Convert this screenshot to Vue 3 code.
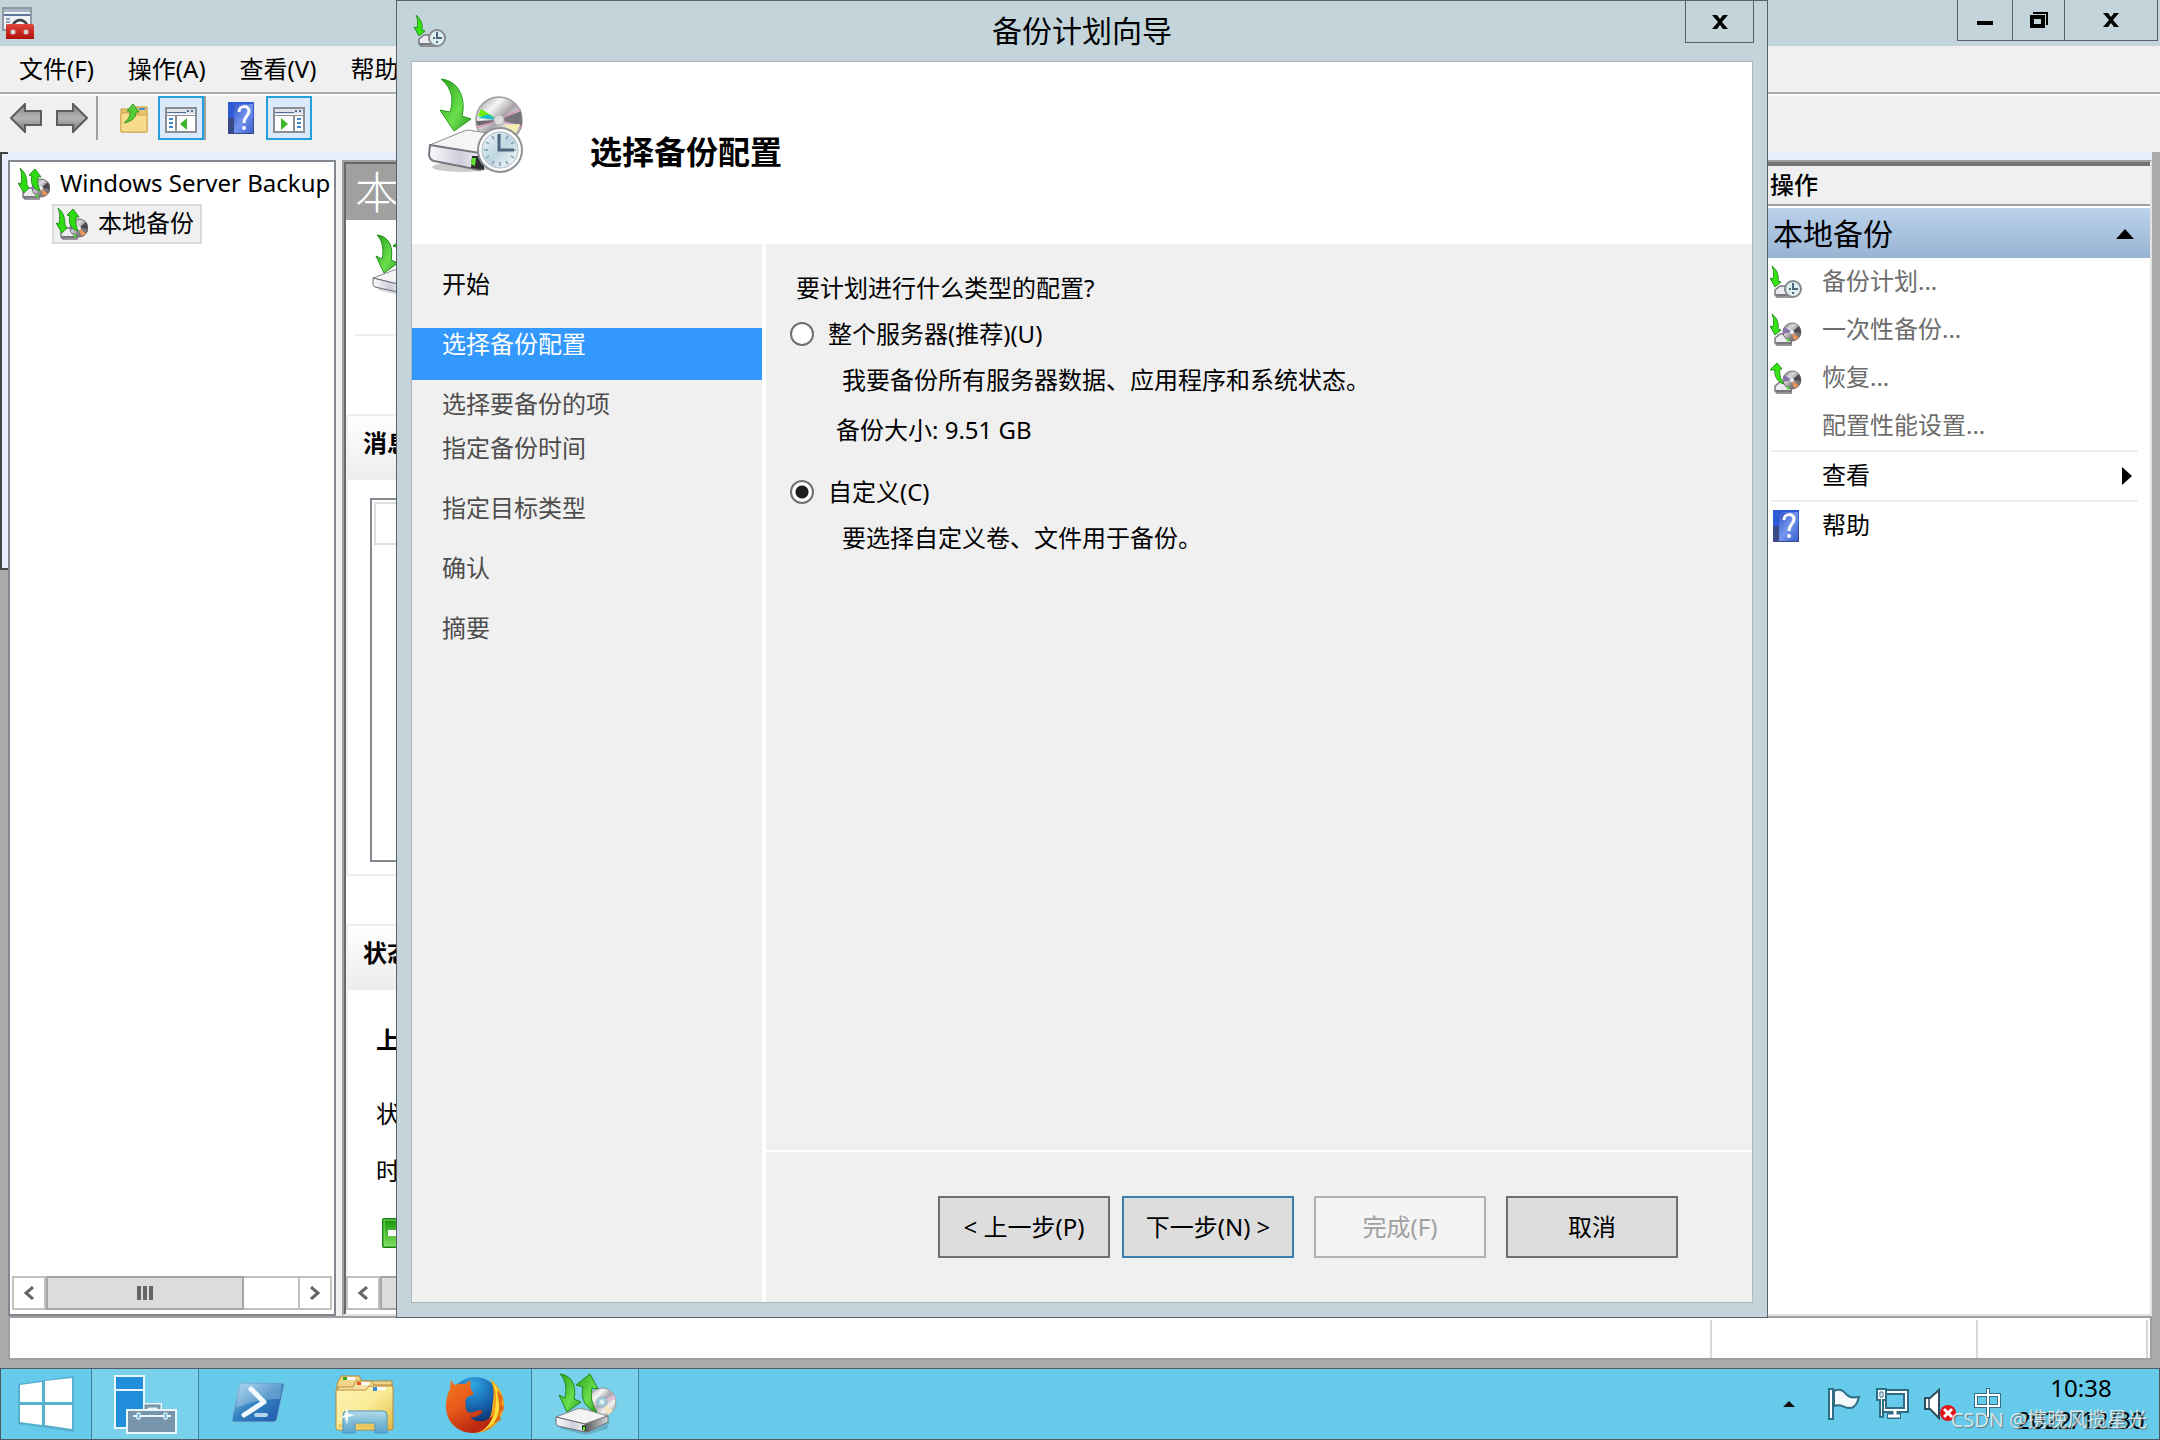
<template>
  <div class="desktop">
    <!-- Общие символы иконок -->
    <svg class="sprite" width="0" height="0" aria-hidden="true">
      <defs>
        <linearGradient id="g-green" x1="0" y1="0" x2="1" y2="1">
          <stop offset="0" stop-color="#2aa01c" />
          <stop offset="0.6" stop-color="#6be04c" />
          <stop offset="1" stop-color="#2c9a1e" />
        </linearGradient>
        <linearGradient id="g-disc" x1="0" y1="0" x2="1" y2="1">
          <stop offset="0" stop-color="#8d8d8d" />
          <stop offset="0.3" stop-color="#f6f6f6" />
          <stop offset="0.5" stop-color="#a9a4a8" />
          <stop offset="0.7" stop-color="#f3f0f2" />
          <stop offset="1" stop-color="#858585" />
        </linearGradient>
        <linearGradient id="g-disc-dark" x1="0" y1="0" x2="1" y2="1">
          <stop offset="0" stop-color="#6d6d70" />
          <stop offset="0.35" stop-color="#dcdcde" />
          <stop offset="0.6" stop-color="#8a868a" />
          <stop offset="1" stop-color="#5c5c5e" />
        </linearGradient>
        <linearGradient id="g-face" x1="0" y1="0" x2="1" y2="0">
          <stop offset="0" stop-color="#fafafd" />
          <stop offset="0.6" stop-color="#cfcfdc" />
          <stop offset="1" stop-color="#ededf4" />
        </linearGradient>
        <linearGradient id="g-side" x1="0" y1="0" x2="1" y2="0">
          <stop offset="0" stop-color="#55555a" />
          <stop offset="1" stop-color="#d8d8da" />
        </linearGradient>
        <linearGradient id="g-clock" x1="0" y1="0" x2="1" y2="1">
          <stop offset="0" stop-color="#f4fafc" />
          <stop offset="0.5" stop-color="#bdd6e0" />
          <stop offset="1" stop-color="#ffffff" />
        </linearGradient>
        <linearGradient id="g-arrow" x1="0" y1="0" x2="0" y2="1">
          <stop offset="0" stop-color="#7d7d7d" />
          <stop offset="0.5" stop-color="#b4b4b4" />
          <stop offset="1" stop-color="#777777" />
        </linearGradient>
        <linearGradient id="g-help" x1="0" y1="0" x2="1" y2="1">
          <stop offset="0" stop-color="#3557c8" />
          <stop offset="0.5" stop-color="#7494ee" />
          <stop offset="1" stop-color="#3a62d0" />
        </linearGradient>
        <linearGradient id="g-folder" x1="0" y1="0" x2="1" y2="1">
          <stop offset="0" stop-color="#fdf3b4" />
          <stop offset="0.5" stop-color="#faeb97" />
          <stop offset="1" stop-color="#e3b93f" />
        </linearGradient>
        <linearGradient id="g-ps" x1="0" y1="0" x2="1" y2="1">
          <stop offset="0" stop-color="#9fd3ec" />
          <stop offset="0.5" stop-color="#2f7fc0" />
          <stop offset="1" stop-color="#2458ac" />
        </linearGradient>
        <linearGradient id="g-red" x1="0" y1="0" x2="0" y2="1">
          <stop offset="0" stop-color="#e2463c" />
          <stop offset="1" stop-color="#b3100c" />
        </linearGradient>
        <radialGradient id="g-globe" cx="0.45" cy="0.15" r="0.85">
          <stop offset="0" stop-color="#30a7e6" />
          <stop offset="0.55" stop-color="#1560a8" />
          <stop offset="1" stop-color="#0a1f56" />
        </radialGradient>
        <linearGradient id="g-fox" x1="0" y1="0" x2="0.5" y2="1">
          <stop offset="0" stop-color="#f07a1e" />
          <stop offset="0.5" stop-color="#ea5a1a" />
          <stop offset="1" stop-color="#b8260f" />
        </linearGradient>
        <linearGradient id="g-glass" x1="0" y1="0" x2="0" y2="1">
          <stop offset="0" stop-color="#b4dcec" />
          <stop offset="0.5" stop-color="#7fbdd8" />
          <stop offset="1" stop-color="#5aa5cf" />
        </linearGradient>
        <linearGradient id="g-ok" x1="0" y1="0" x2="0" y2="1">
          <stop offset="0" stop-color="#18990f" />
          <stop offset="1" stop-color="#7edc5c" />
        </linearGradient>

        <symbol id="i-backup" viewBox="0 0 64 64">
          <path d="M4 47 30 62 55 50 52 58 30 64 6 58Z" fill="#000" opacity=".15" />
          <circle cx="47" cy="31" r="14" fill="url(#g-disc)" stroke="#9a9a9a" />
          <path d="M47 31 59 24 61 28Z" fill="#e5b9d8" />
          <path d="M47 31 58 40 53 44Z" fill="#f5e8bd" />
          <circle cx="47" cy="31" r="5" fill="#a9cfdd" stroke="#8cb4c4" />
          <circle cx="47" cy="31" r="2" fill="#e9f4f8" />
          <path d="M1 46 22 38Q25 37 29 38L53 45 30 53Z" fill="#f4f4f4" stroke="#8a8a8a" />
          <path d="M1 46 30 53V61L3 55Q1 54 1 52Z" fill="url(#g-face)" stroke="#6a6a72" />
          <path d="M30 53 53 45V51L33 61 30 61Z" fill="url(#g-side)" stroke="#777" />
          <path d="M27 54 31 55V60L27 59Z" fill="#173d12" />
          <path d="M28 56H30V59H28Z" fill="#6dea3c" />
          <path d="M5 3C16 4 22 14 19 28L26 31 12 41 4 24 10 27C12 18 11 9 5 3Z" fill="url(#g-green)" stroke="#208a18" />
          <path d="M35 3 43 18 37 17C35 25 37 34 42 41 31 38 25 28 28 16L21 14Z" fill="url(#g-green)" stroke="#208a18" />
        </symbol>

        <symbol id="i-wizard" viewBox="0 0 96 96">
          <ellipse cx="34" cy="89" rx="30" ry="5" fill="#000" opacity=".2" />
          <circle cx="71" cy="42" r="23" fill="url(#g-disc)" stroke="#9b9b9b" stroke-width="1.5" />
          <path d="M71 42 50 38 53 31Z" fill="#6af000" />
          <path d="M71 42 50 40 60 36Z" fill="#1fc0c8" />
          <path d="M71 42 93 33 94 48Z" fill="#77737a" />
          <path d="M71 42 48 43 50 48Z" fill="#6d686d" />
          <path d="M71 42 93 31M71 42 49 50M71 42 94 50" stroke="#dd7fb8" stroke-width="1" />
          <path d="M75 47 92 46 88 55Z" fill="#f6eeb0" />
          <circle cx="71" cy="42" r="5" fill="#ddd" stroke="#b5b5b5" />
          <path d="M2 67 36 53Q40 51 46 53L60 55 52 77Z" fill="#f5f5f5" stroke="#8c8c8c" />
          <path d="M2 67 52 75V92L6 83Q2 82 1 77Z" fill="url(#g-face)" stroke="#77777f" stroke-width="2" />
          <path d="M44 78 56 78 56 92 43 90Z" fill="#2d2d30" />
          <path d="M44 80 48 80 47 88 43 86Z" fill="#5ee02e" />
          <circle cx="72" cy="72" r="22" fill="#fff" stroke="#8e9296" stroke-width="2" />
          <circle cx="72" cy="72" r="18" fill="url(#g-clock)" stroke="#a9b8c0" />
          <path d="M72 56V60M72 84V88M56 72H60M84 72H88M64 58 66 61M80 58 78 61M58 64 61 66M86 64 83 66M58 80 61 78M64 86 66 83M80 86 78 83M86 80 83 78" stroke="#7f9fb0" stroke-width="1.5" />
          <path d="M71 56V72H86" fill="none" stroke="#4a667e" stroke-width="3" />
          <path d="M13 1C32 3 38 22 34 38L43 41 26 53 12 32 22 34C26 22 24 10 13 1Z" fill="url(#g-green)" stroke="#259a1d" />
        </symbol>

        <symbol id="i-drive-s" viewBox="0 0 32 32">
          <path d="M5 24 10 20H22L21 31H7L5 29Z" fill="#ececf0" stroke="#77777f" stroke-width="1.5" />
          <path d="M6 29H21" stroke="#77777f" stroke-width="2" />
        </symbol>
        <symbol id="i-disc-s" viewBox="0 0 32 32">
          <circle cx="22" cy="18" r="9" fill="url(#g-disc-dark)" stroke="#6a6a6d" />
          <path d="M22 18 14 13 13 20Z" fill="#8a6fae" />
          <path d="M22 18 29 12 31 19Z" fill="#4d484c" />
          <path d="M22 18 29 24 24 26Z" fill="#f2935c" />
          <path d="M16 24 20 26 18 28Z" fill="#4be01e" />
          <circle cx="22" cy="18" r="2" fill="#eee" />
        </symbol>
        <symbol id="i-down-s" viewBox="0 0 32 32">
          <path d="M2 0C7 4 9 9 8 15L11 16 5 21 0 12 3 13C4 8 4 4 2 0Z" fill="#35e612" stroke="#2b8f22" />
        </symbol>
        <symbol id="i-up-s" viewBox="0 0 32 32">
          <path d="M7 1 12 7H10C9 13 11 18 14 22 7 20 4 14 5 8L0 8Z" fill="#35e612" stroke="#2b8f22" />
        </symbol>
        <symbol id="i-clock-s" viewBox="0 0 32 32">
          <circle cx="23" cy="23" r="8" fill="#e0eff0" stroke="#858a8c" stroke-width="2" />
          <path d="M23 17V23H28M19 23H21M23 26V28" fill="none" stroke="#4a667e" stroke-width="2" />
        </symbol>

        <symbol id="i-schedule" viewBox="0 0 32 32">
          <use href="#i-drive-s" /><use href="#i-down-s" /><use href="#i-clock-s" />
        </symbol>
        <symbol id="i-once" viewBox="0 0 32 32">
          <use href="#i-drive-s" /><use href="#i-disc-s" /><use href="#i-down-s" />
        </symbol>
        <symbol id="i-recover" viewBox="0 0 32 32">
          <use href="#i-drive-s" /><use href="#i-disc-s" /><use href="#i-up-s" />
        </symbol>
        <symbol id="i-node" viewBox="0 0 32 32">
          <use href="#i-drive-s" /><use href="#i-disc-s" x="1" y="2" />
          <path d="M2 0C7 4 9 9 9 17L11 20 6 25 0 15 3 16C4 10 4 4 2 0Z" fill="#2fdc12" stroke="#2b8f22" />
          <path d="M17 1 23 9H20C19 14 20 18 22 23 14 21 12 13 14 8L11 7Z" fill="#2fdc12" stroke="#2b8f22" />
        </symbol>

        <symbol id="i-help" viewBox="0 0 26 32">
          <path d="M0 0H26V32H0Z" fill="#3a4a86" />
          <path d="M0 0H26V16H0Z" fill="#2f5ad6" />
          <path d="M6 2H25V31H6Z" fill="url(#g-help)" />
          <path d="M11 10C11 3 21 3 21 9 21 14 16 14 16 21" fill="none" stroke="#fff" stroke-width="3" />
          <circle cx="16" cy="26" r="2" fill="#fff" />
        </symbol>

        <symbol id="i-mmc" viewBox="0 0 32 32">
          <path d="M1 1H29V23H1Z" fill="#eef1f4" stroke="#8f9aa5" stroke-width="2" />
          <path d="M2 2H28V5H2Z" fill="#a9b4c8" />
          <path d="M2 7H28V9H2Z" fill="#5f7299" />
          <path d="M4 12H8M4 15H8M4 18H8" stroke="#6a8ab0" stroke-width="1.5" />
          <path d="M11 17Q18 9 25 17" fill="none" stroke="#3f4145" stroke-width="2.5" />
          <path d="M4 19Q4 17 6 17H30Q32 17 32 19V32H4Z" fill="url(#g-red)" />
          <circle cx="11" cy="25" r="2.5" fill="#d9d0d0" /><circle cx="24" cy="25" r="2.5" fill="#d9d0d0" />
        </symbol>
      </defs>
    </svg>

    <!-- Окно консоли -->
    <section class="console">
      <header class="titlebar">
        <svg class="ico32"><use href="#i-mmc" /></svg>
        <div class="win-controls">
          <button class="win-btn" aria-label="最小化">
            <svg width="16" height="16" viewBox="0 0 16 16"><path d="M0 9H16V13H0Z" /></svg>
          </button>
          <button class="win-btn middle" aria-label="还原">
            <svg width="18" height="16" viewBox="0 0 18 16">
              <path d="M3 0H18V13H16V2H3Z" /><path d="M0 3H15V16H0ZM4 7V12H11V7Z" fill-rule="evenodd" />
            </svg>
          </button>
          <button class="win-btn wide" aria-label="关闭">
            <svg width="16" height="14" viewBox="0 0 16 14"><path d="M0 0H5L8 4 11 0H16L10 7 16 14H11L8 10 5 14H0L6 7Z" /></svg>
          </button>
        </div>
      </header>

      <nav class="menubar">
        <button v-for="item in menu" :key="item" class="menu-item">{{ item }}</button>
      </nav>

      <div class="toolbar">
        <button class="tool" aria-label="后退">
          <svg width="32" height="30" viewBox="0 0 32 30"><path d="M1 15 15 1V8H31V22H15V29Z" fill="url(#g-arrow)" stroke="#5d5d5d" stroke-width="2" /></svg>
        </button>
        <button class="tool" aria-label="前进">
          <svg width="32" height="30" viewBox="0 0 32 30"><path d="M31 15 17 1V8H1V22H17V29Z" fill="url(#g-arrow)" stroke="#5d5d5d" stroke-width="2" /></svg>
        </button>
        <span class="tool-sep"></span>
        <button class="tool folder" aria-label="上移">
          <svg width="28" height="30" viewBox="0 0 28 30">
            <path d="M1 6H12L14 4H27V29H1Z" fill="#e8c468" stroke="#c39a3c" />
            <path d="M1 10H12L14 12H27V29H1Z" fill="#f8dc8e" stroke="#cfa64a" />
            <path d="M19 5H25V7H19Z" fill="#3f8fd8" />
            <path d="M13 1 19 9 16 9C16 15 12 18 4 20 10 15 10 12 10 8L7 8Z" fill="#57cc3a" stroke="#2f9a22" />
          </svg>
        </button>
        <button class="tool pressed" aria-label="显示树">
          <svg width="32" height="26" viewBox="0 0 32 26">
            <path d="M1 1H31V25H1Z" fill="#fff" stroke="#8b8f94" stroke-width="2" />
            <path d="M2 2H30V7H2Z" fill="#dfe3e8" /><path d="M2 5H21V6H2ZM22 3H24V5H22ZM26 3H28V5H26Z" fill="#4f6f96" />
            <path d="M2 8H30V9H2ZM10 9H12V25H10Z" fill="#8b8f94" />
            <path d="M4 12H8M4 16H8M4 20H8" stroke="#3f86cc" stroke-width="2" />
            <path d="M22 11V23L15 17Z" fill="#3fb52a" />
          </svg>
        </button>
        <span class="tool-sep tight"></span>
        <button class="tool help" aria-label="帮助">
          <svg width="26" height="32"><use href="#i-help" /></svg>
        </button>
        <button class="tool pressed" aria-label="显示操作窗格">
          <svg width="32" height="26" viewBox="0 0 32 26">
            <path d="M1 1H31V25H1Z" fill="#fff" stroke="#8b8f94" stroke-width="2" />
            <path d="M2 2H30V7H2Z" fill="#dfe3e8" /><path d="M2 5H21V6H2ZM22 3H24V5H22ZM26 3H28V5H26Z" fill="#4f6f96" />
            <path d="M2 8H30V9H2ZM20 9H22V25H20Z" fill="#8b8f94" />
            <path d="M24 12H28M24 16H28M24 20H28" stroke="#3f86cc" stroke-width="2" />
            <path d="M8 11V23L15 17Z" fill="#3fb52a" />
          </svg>
        </button>
      </div>

      <div class="workspace">
        <div class="edge"></div>
        <div class="frame">
          <div class="panes">
            <aside class="tree">
              <ul class="tree-list">
                <li class="tree-node">
                  <svg class="ico32"><use href="#i-node" /></svg><span class="label">Windows Server Backup</span>
                </li>
                <li class="tree-node child">
                  <svg class="ico32"><use href="#i-node" /></svg><span class="label">本地备份</span>
                </li>
              </ul>
              <div class="scrollbar">
                <button class="scroll-btn" aria-label="向左滚动">
                  <svg width="12" height="14" viewBox="0 0 12 14"><path d="M10 1 3 7 10 13" /></svg>
                </button>
                <div class="thumb"><i></i><i></i><i></i></div>
                <button class="scroll-btn end" aria-label="向右滚动">
                  <svg width="12" height="14" viewBox="0 0 12 14"><path d="M2 1 9 7 2 13" /></svg>
                </button>
              </div>
            </aside>

            <main class="center">
              <h2 class="center-title">本地备份</h2>
              <div class="center-intro">
                <svg width="64" height="64"><use href="#i-backup" /></svg>
              </div>
              <section class="group messages">
                <h3 class="group-title">消息</h3>
                <div class="list"><div class="list-head"></div></div>
              </section>
              <section class="group status">
                <h3 class="group-title">状态</h3>
                <div class="status-rows">
                  <strong class="status-line">上次备份</strong>
                  <span class="status-line second">状态:</span>
                  <span class="status-line third">时间:</span>
                  <svg class="ok" width="30" height="30" viewBox="0 0 30 30">
                    <rect width="30" height="30" rx="2" fill="#15800d" />
                    <rect x="2" y="2" width="26" height="26" fill="url(#g-ok)" stroke="#8be070" />
                    <path d="M6 12H17V7L25 15 17 23V18H6Z" fill="#fff" />
                  </svg>
                </div>
              </section>
              <div class="scrollbar center-scroll">
                <button class="scroll-btn" aria-label="向左滚动">
                  <svg width="12" height="14" viewBox="0 0 12 14"><path d="M10 1 3 7 10 13" /></svg>
                </button>
                <div class="thumb"></div>
              </div>
            </main>

            <aside class="actions">
              <h3 class="actions-head">操作</h3>
              <div class="actions-group">
                <span>本地备份</span>
                <svg width="18" height="10" viewBox="0 0 18 10"><path d="M9 0 18 10H0Z" /></svg>
              </div>
              <ul class="action-list">
                <li v-for="a in actions" :key="a.label" :class="{ ruled: a.ruled }">
                  <button :class="['action', { dim: a.dim }]">
                    <span class="action-icon">
                      <svg v-if="a.icon" class="ico32"><use :href="'#' + a.icon" /></svg>
                    </span>
                    <span class="label">{{ a.label }}</span>
                    <svg v-if="a.sub" class="sub" width="10" height="18" viewBox="0 0 10 18"><path d="M0 0 10 9 0 18Z" /></svg>
                  </button>
                </li>
              </ul>
            </aside>
          </div>
          <footer class="statusbar"><span></span><span></span><span></span></footer>
        </div>
      </div>
    </section>

    <!-- Мастер расписания архивации -->
    <section class="wizard" role="dialog" aria-labelledby="wizard-title">
      <header class="wizard-bar">
        <svg class="ico32"><use href="#i-schedule" /></svg>
        <h1 id="wizard-title">备份计划向导</h1>
        <button class="win-btn wizard-close" aria-label="关闭">
          <svg width="16" height="14" viewBox="0 0 16 14"><path d="M0 0H5L8 4 11 0H16L10 7 16 14H11L8 10 5 14H0L6 7Z" /></svg>
        </button>
      </header>
      <div class="wizard-body">
        <div class="wizard-head">
          <svg width="96" height="96"><use href="#i-wizard" /></svg>
          <h2>选择备份配置</h2>
        </div>
        <div class="wizard-main">
          <ol class="steps">
            <li
              v-for="(step, i) in steps"
              :key="step.label"
              :class="['step', { done: i < current, active: i === current, compact: step.compact }]"
            >
              {{ step.label }}
            </li>
          </ol>
          <div class="page">
            <fieldset class="options">
              <legend>要计划进行什么类型的配置?</legend>
              <div class="option">
                <label><input v-model="config" type="radio" name="config" value="full" />整个服务器(推荐)(U)</label>
                <p>我要备份所有服务器数据、应用程序和系统状态。</p>
                <p class="size">备份大小: 9.51 GB</p>
              </div>
              <div class="option custom">
                <label><input v-model="config" type="radio" name="config" value="custom" />自定义(C)</label>
                <p>要选择自定义卷、文件用于备份。</p>
              </div>
            </fieldset>
            <footer class="buttons">
              <button class="btn">&lt; 上一步(P)</button>
              <button class="btn primary">下一步(N) &gt;</button>
              <button class="btn spaced" disabled>完成(F)</button>
              <button class="btn spaced">取消</button>
            </footer>
          </div>
        </div>
      </div>
    </section>

    <!-- Панель задач -->
    <footer class="taskbar">
      <button class="start" aria-label="开始">
        <svg width="56" height="56" viewBox="0 0 56 56">
          <path d="M0 8 56 0V56L0 48Z" fill="#58b0cf" />
          <path d="M2 9 24 6V26H2ZM27 5 54 2V26H27ZM2 29H24V49L2 46ZM27 29H54V53L27 49Z" fill="#fff" />
        </svg>
      </button>
      <button class="task open" aria-label="服务器管理器">
        <svg width="64" height="60" viewBox="0 0 64 60">
          <path d="M2 2H31V54H2Z" fill="#218edb" stroke="#e9f6fc" stroke-width="2" />
          <path d="M2 16H31" stroke="#e9f6fc" stroke-width="2" />
          <path d="M33 36V32H46V36" fill="none" stroke="#e9f6fc" stroke-width="6" />
          <path d="M33 36V32H46V36" fill="none" stroke="#7695aa" stroke-width="3" />
          <path d="M14 36H63V59H14Z" fill="#7695aa" stroke="#e9f6fc" stroke-width="2" />
          <path d="M20 42H58" stroke="#e9f6fc" stroke-width="2" />
          <path d="M24 39H27V45H24ZM51 39H54V45H51Z" fill="#54b4e4" stroke="#fff" />
        </svg>
      </button>
      <button class="task" aria-label="PowerShell">
        <svg width="60" height="44" viewBox="-3 0 60 44">
          <path d="M14 1H54Q57 1 56 4L49 37Q48 40 45 40H6Q3 40 4 37L11 4Q11 1 14 1Z" fill="url(#g-ps)" stroke="#7db9d8" />
          <path d="M14 2H54L52 17Q30 16 8 26L12 4Z" fill="#fff" opacity=".25" />
          <path d="M23 7 36 20 16 33" fill="none" stroke="#f2f9fd" stroke-width="5" stroke-linecap="round" stroke-linejoin="round" />
          <path d="M28 33H38" stroke="#b4d4ee" stroke-width="4" stroke-linecap="round" />
        </svg>
      </button>
      <button class="task" aria-label="文件资源管理器">
        <svg width="60" height="60" viewBox="0 0 60 60">
          <path d="M2 10 6 2H24L27 7H57V30H2Z" fill="#efd489" stroke="#b98a3a" />
          <path d="M3 13H18L21 7H36L39 11H57V30H3Z" fill="#f6e2a0" stroke="#b98a3a" />
          <path d="M1 16H31L34 12H58V54Q58 56 56 56H3Q1 56 1 54Z" fill="url(#g-folder)" stroke="#b98a3a" />
          <path d="M9 3H20V6H9ZM23 8H34V11H23ZM39 13H51V16H39Z" fill="#fff" />
          <path d="M8 3H12V6H8Z" fill="#3aa51c" /><path d="M22 8H26V11H22Z" fill="#e45316" /><path d="M38 13H42V17H38Z" fill="#3b8fd3" />
          <path d="M3 51H57M3 53H57" stroke="#e2b64a" />
          <path d="M8 59V41Q8 37 12 37H48Q52 37 52 41V59H40V51Q40 49 38 49H22Q20 49 20 51V59Z" fill="url(#g-glass)" stroke="#4f96be" />
          <path d="M12 32 13 40 20 41 13 43 12 51 10 43 2 46 10 41Z" fill="#fff" />
        </svg>
      </button>
      <button class="task" aria-label="Firefox">
        <svg width="60" height="60" viewBox="0 0 60 60">
          <circle cx="30" cy="29" r="26" fill="url(#g-globe)" />
          <path d="M45 5C57 14 62 28 57 40 52 53 41 59 29 59 40 54 46 45 47 35 48 24 51 16 45 5Z" fill="#f5a21a" />
          <path d="M47 8C53 18 51 28 50 38 47 49 41 55 32 58 47 55 55 44 56 32 57 22 53 13 47 8Z" fill="#fbe03a" />
          <path d="M52 16 58 24 56 30 60 34 54 40 56 46 47 50 44 55 33 59C46 55 55 45 54 30Z" fill="#e06a17" />
          <path d="M6 5C7 8 8 10 10 11 14 9 18 10 21 10 21 8 23 7 26 7 25 11 25 14 27 17L29 20 22 23 20 27C22 31 19 32 22 37 26 42 32 34 38 37 34 43 29 44 25 43 31 50 42 48 48 41 45 53 36 59 28 59 12 59 1 47 1 33 1 24 3 19 5 15Z" fill="url(#g-fox)" />
        </svg>
      </button>
      <button class="task open" aria-label="Windows Server Backup">
        <svg width="64" height="64" viewBox="-2 1 64 64"><use href="#i-backup" width="64" height="64" /></svg>
      </button>

      <div class="tray">
        <svg class="chevron" width="12" height="6" viewBox="0 0 12 6"><path d="M6 0 12 6H0Z" fill="#111" /></svg>
        <svg width="34" height="34" viewBox="0 0 34 34">
          <path d="M7 4C13 1 17 4 20 8 24 12 28 10 32 10 31 14 29 20 24 21 17 22 15 16 7 19Z" fill="#f4fafc" stroke="#2f6d85" stroke-width="2" />
          <path d="M2 2H6V32H2Z" fill="#fff" stroke="#2f6d85" stroke-width="2" />
        </svg>
        <svg width="34" height="34" viewBox="0 0 34 34">
          <path d="M9 5H31V23H9Z" fill="none" stroke="#2f6d85" stroke-width="6" />
          <path d="M20 23V28M12 29H26" stroke="#2f6d85" stroke-width="6" />
          <path d="M9 5H31V23H9Z" fill="none" stroke="#fff" stroke-width="2" />
          <path d="M20 23V28M13 29H25" stroke="#fff" stroke-width="3" />
          <path d="M2 2H11V13H8V30H5V13H2Z" fill="#fff" stroke="#2f6d85" stroke-width="2" />
          <path d="M5 5H8V10H5Z" fill="none" stroke="#2f6d85" />
        </svg>
        <svg width="34" height="34" viewBox="0 0 34 34">
          <path d="M2 11H7L16 3V31L7 22H2Z" fill="#fff" stroke="#2c4d5a" stroke-width="2" />
          <path d="M6 11V22" stroke="#2c4d5a" stroke-width="1.5" />
          <circle cx="25" cy="26" r="8" fill="#e01414" />
          <path d="M21 22 29 30M29 22 21 30" stroke="#fff" stroke-width="3" />
        </svg>
        <svg width="34" height="34" viewBox="0 0 34 34">
          <path d="M5 8H28V19H5ZM17 1V31" fill="none" stroke="#2f6d85" stroke-width="4" />
          <path d="M5 8H28V19H5ZM17 2V30" fill="none" stroke="#fff" stroke-width="2" />
        </svg>
        <div class="clock">
          <time>10:38</time>
          <time>2022/12/30</time>
        </div>
      </div>
      <span class="watermark">CSDN @携晚风揽星光</span>
    </footer>
  </div>
</template>

<script setup>
import { ref } from 'vue'

const menu = ['文件(F)', '操作(A)', '查看(V)', '帮助(H)']

const actions = [
  { label: '备份计划...', icon: 'i-schedule', dim: true },
  { label: '一次性备份...', icon: 'i-once', dim: true },
  { label: '恢复...', icon: 'i-recover', dim: true },
  { label: '配置性能设置...', dim: true },
  { label: '查看', sub: true, ruled: true },
  { label: '帮助', icon: 'i-help', ruled: true }
]

const steps = [
  { label: '开始' },
  { label: '选择备份配置' },
  { label: '选择要备份的项', compact: true },
  { label: '指定备份时间' },
  { label: '指定目标类型' },
  { label: '确认' },
  { label: '摘要' }
]

const current = ref(1)
const config = ref('custom')
</script>

<style>
body {
  margin: 0;
}
</style>

<style scoped>
.desktop {
  position: relative;
  display: flex;
  flex-direction: column;
  min-height: 100vh;
  overflow: hidden;
  background: #aaaaaa;
  color: #000;
  font-family: "Noto Sans", "Noto Sans CJK SC", sans-serif;
  font-size: 24px;
  line-height: 32px;
}

.desktop * {
  box-sizing: border-box;
}

.sprite {
  position: absolute;
}

button {
  margin: 0;
  padding: 0;
  border: 0;
  background: none;
  color: inherit;
  font: inherit;
}

h1,
h2,
h3,
p,
ul,
ol {
  margin: 0;
  padding: 0;
  list-style: none;
  font-weight: 400;
}

svg {
  display: block;
  flex: none;
}

.ico32 {
  width: 32px;
  height: 32px;
}

/* text sits slightly above the middle of its icon */
.label {
  padding-bottom: 3px;
}

/* console window */
.console {
  flex: 1;
  display: flex;
  flex-direction: column;
}

.titlebar {
  display: flex;
  justify-content: space-between;
  height: 46px;
  padding: 0 2px;
  background: #c3d5db;
}

.titlebar .ico32 {
  margin-top: 7px;
}

.win-controls {
  display: flex;
  height: 41px;
}

.win-btn {
  display: flex;
  align-items: center;
  justify-content: center;
  width: 56px;
  border: 1px solid #5b5f6b;
  border-top: 0;
}

.win-btn + .win-btn {
  border-left: 0;
}

.win-btn.middle {
  width: 52px;
}

.win-btn.wide {
  width: 93px;
}

.menubar {
  display: flex;
  align-items: center;
  gap: 34px;
  height: 46px;
  padding-left: 19px;
  background: #f0f0f0;
}

.menu-item {
  white-space: nowrap;
}

.toolbar {
  display: flex;
  height: 60px;
  padding: 2px 0 12px 10px;
  border-top: 2px solid #a9abad;
  background: #f0f0f0;
  box-shadow: inset 0 2px #f7f9fb;
}

.tool {
  display: flex;
  align-items: center;
  justify-content: center;
  width: 32px;
}

.tool + .tool {
  margin-left: 14px;
}

.tool-sep {
  width: 2px;
  margin-left: 8px;
  background: #a0a0a0;
}

.tool-sep.tight {
  margin-left: 0;
}

.tool.folder {
  width: 28px;
  margin-left: 22px;
}

.tool.help {
  width: 26px;
  margin-left: 22px;
}

.tool.pressed {
  width: 46px;
  margin-left: 10px;
  padding-top: 4px;
  border: 2px solid #26a0da;
  background: #daeafb;
}

.tool.help + .pressed {
  margin-left: 12px;
}

.workspace {
  flex: 1;
  display: flex;
  padding-right: 8px;
}

.edge {
  width: 8px;
  height: 418px;
  border: 2px solid #444;
  border-right: 0;
  background: #e8eefe;
}

.frame {
  flex: 1;
  display: flex;
  flex-direction: column;
  min-width: 0;
  padding-bottom: 8px;
}

.panes {
  flex: 1;
  display: flex;
  gap: 6px;
  padding-top: 8px;
  background: linear-gradient(#e8eefe 8px, #f0f0f0 8px);
}

.tree {
  display: flex;
  flex-direction: column;
  justify-content: space-between;
  width: 328px;
  padding: 0 2px;
  border: 2px solid #828790;
  background: #fff;
}

.tree-list {
  overflow: hidden;
  padding-top: 2px;
}

.tree-node {
  display: flex;
  align-items: center;
  gap: 10px;
  height: 40px;
  padding-left: 6px;
  white-space: nowrap;
}

.tree-node.child {
  width: 150px;
  margin-left: 40px;
  padding-left: 2px;
  border: 2px solid #d9d9d9;
  background: #f0f0f0;
}

.scrollbar {
  display: flex;
  justify-content: space-between;
  height: 34px;
  margin-bottom: 4px;
}

.scroll-btn {
  display: flex;
  align-items: center;
  justify-content: center;
  width: 34px;
  border: 2px solid #c0c0c0;
}

.scroll-btn path {
  fill: none;
  stroke: #666;
  stroke-width: 3;
}

.scroll-btn.end {
  margin-left: auto;
}

.thumb {
  display: flex;
  align-items: center;
  justify-content: center;
  gap: 2px;
  width: 198px;
  border: 2px solid #a6a6a6;
  background: #dcdcdc;
}

.thumb i {
  width: 4px;
  height: 14px;
  background: #666;
}

.tree .scrollbar,
.center-scroll {
  border-top: 2px solid #c0c0c0;
  border-bottom: 2px solid #c0c0c0;
}

.tree .scroll-btn,
.tree .thumb,
.center-scroll .scroll-btn,
.center-scroll .thumb {
  margin-top: -2px;
  margin-bottom: -2px;
}

.center {
  flex: 1;
  display: flex;
  flex-direction: column;
  min-width: 0;
  padding: 2px 0 0 2px;
  border: 2px solid #a0a0a0;
  border-right: 0;
  border-bottom-color: #e3e3e3;
  background: #fff;
  box-shadow: inset 2px 2px #696969;
}

.center-title {
  height: 56px;
  padding-left: 9px;
  background: #a0a0a0;
  color: #fff;
  font-size: 44px;
  font-weight: 300;
  line-height: 56px;
}

.center-intro {
  height: 116px;
  margin-left: 8px;
  padding: 12px 0 0 18px;
  border-bottom: 2px solid #f0f0f0;
}

.group {
  border: 2px solid #f0f0f0;
  border-right: 0;
}

.group.messages {
  height: 462px;
  margin-top: 78px;
}

.group-title {
  height: 64px;
  padding-left: 15px;
  background: linear-gradient(#fff, #ececec);
  font-size: 24px;
  font-weight: 700;
  line-height: 54px;
}

.list {
  height: 364px;
  margin: 18px 0 0 22px;
  padding: 2px 0 0 2px;
  border: 2px solid #828790;
}

.list-head {
  height: 43px;
  border: 2px solid #dedede;
}

.group.status {
  flex: 1;
  margin-top: 48px;
  border-bottom: 0;
}

.status-rows {
  display: flex;
  flex-direction: column;
  padding: 34px 0 0 28px;
}

.status-line.second {
  margin-top: 42px;
}

.status-line.third {
  margin-top: 25px;
}

.ok {
  margin: 31px 0 0 6px;
}

.center-scroll {
  justify-content: flex-start;
}

.actions {
  flex: none;
  width: 384px;
  margin-left: -6px;
  border-top: 2px solid #a0a0a0;
  border-right: 2px solid #e3e3e3;
  border-bottom: 2px solid #e3e3e3;
  background: #fff;
}

.actions-head {
  height: 44px;
  margin-bottom: 2px;
  padding-left: 2px;
  border-top: 4px solid #757575;
  border-bottom: 2px solid #a0a0a0;
  background: #f0f0f0;
  font-size: 24px;
  font-weight: 500;
  line-height: 38px;
}

.actions-group {
  display: flex;
  align-items: center;
  justify-content: space-between;
  height: 50px;
  padding: 2px 16px 0 5px;
  background: linear-gradient(#bbd2ec, #98b3d3);
  font-size: 30px;
}

.action-list li.ruled::before {
  content: "";
  display: block;
  height: 2px;
  margin: 0 12px 0 2px;
  background: #f0f0f0;
}

.action {
  display: flex;
  align-items: center;
  width: 100%;
  height: 48px;
  padding: 0 18px 0 2px;
}

.action.dim {
  color: #6d6d6d;
}

.action-icon {
  width: 52px;
}

.sub {
  margin-left: auto;
}

.statusbar {
  display: flex;
  justify-content: flex-end;
  height: 44px;
  padding-right: 2px;
  border: 2px solid #a0a0a0;
  background: #fff;
}

.statusbar span {
  width: 170px;
  margin-top: 2px;
  border-right: 2px solid #d7d7d7;
}

.statusbar span:nth-child(2) {
  width: 266px;
}

/* wizard */
.wizard {
  position: absolute;
  top: 0;
  right: 392px;
  bottom: 122px;
  left: 396px;
  display: flex;
  flex-direction: column;
  padding: 0 15px 15px;
  border: 1px solid #5b5f6b;
  background: #c3d5db;
}

.wizard-bar {
  display: grid;
  grid-template-columns: 1fr auto 1fr;
  height: 61px;
}

.wizard-bar .ico32 {
  margin: 14px 0 0 2px;
}

.wizard-bar h1 {
  font-size: 30px;
  line-height: 60px;
}

.wizard-close {
  justify-self: end;
  width: 69px;
  height: 42px;
  margin-right: -2px;
}

.wizard-body {
  flex: 1;
  display: flex;
  flex-direction: column;
  background: #fff;
  box-shadow: 0 0 0 1px #b0b5bc;
}

.wizard-head {
  display: flex;
  gap: 66px;
  height: 182px;
  padding: 16px;
}

.wizard-head h2 {
  font-size: 32px;
  font-weight: 700;
  line-height: 148px;
}

.wizard-main {
  flex: 1;
  display: flex;
  gap: 4px;
}

.steps {
  display: flex;
  flex-direction: column;
  gap: 8px;
  width: 350px;
  padding-top: 24px;
  background: #f0f0f0;
}

.step {
  height: 52px;
  padding-left: 30px;
  color: #4d4d4d;
}

.step.done {
  color: #000;
}

.step.active {
  background: #3399ff;
  color: #fff;
}

.step.compact {
  height: 36px;
}

.page {
  flex: 1;
  display: flex;
  flex-direction: column;
  background: #f0f0f0;
}

.options {
  flex: 1;
  margin: 0;
  padding: 28px 0 0 24px;
  border: 0;
}

.options legend {
  float: left;
  width: 100%;
  margin-bottom: 14px;
  padding: 0 0 0 6px;
}

.option {
  clear: both;
}

.option label {
  display: flex;
  align-items: center;
  gap: 14px;
}

.option input {
  width: 24px;
  height: 24px;
  margin: 0;
  border: 2px solid #707070;
  border-radius: 50%;
  background: #fff;
  appearance: none;
}

.option input:checked {
  background: radial-gradient(circle, #1e1e1e 6px, #fff 7px);
}

.option p {
  margin-top: 14px;
  padding-left: 52px;
}

.option p.size {
  margin-top: 18px;
  padding-left: 46px;
}

.option.custom {
  margin-top: 30px;
}

.buttons {
  display: flex;
  justify-content: flex-end;
  gap: 12px;
  padding: 44px 74px 44px 0;
  border-top: 2px solid #fff;
}

.btn {
  width: 172px;
  height: 62px;
  border: 2px solid #707070;
  background: #dddddd;
}

.btn.primary {
  border-color: #3c7fb1;
}

.btn.spaced {
  margin-left: 8px;
}

.btn:disabled {
  border-color: #adb2b5;
  background: #f4f4f4;
  color: #a0a0a0;
}

/* taskbar */
.taskbar {
  position: relative;
  display: flex;
  height: 72px;
  border: 1px solid #4f5a60;
  background: #66caea;
}

.start,
.task {
  display: flex;
  align-items: center;
  justify-content: center;
}

.start {
  width: 90px;
}

.task {
  width: 108px;
  margin-right: 2px;
}

.task.open {
  border: solid #3f7f95;
  border-width: 0 1px;
  background: #79d1ec;
}

.tray {
  display: flex;
  align-items: center;
  gap: 14px;
  margin-left: auto;
  padding-right: 16px;
}

.chevron {
  margin-right: 18px;
}

.clock {
  display: flex;
  flex-direction: column;
  align-items: center;
  width: 124px;
}

.watermark {
  position: absolute;
  right: 12px;
  bottom: 3px;
  color: rgba(255, 255, 255, 0.75);
  font-family: "Open Sans", "Noto Sans CJK SC", sans-serif;
  font-size: 20px;
  text-shadow: 1px 1px 1px rgba(90, 90, 90, 0.7);
}
</style>
